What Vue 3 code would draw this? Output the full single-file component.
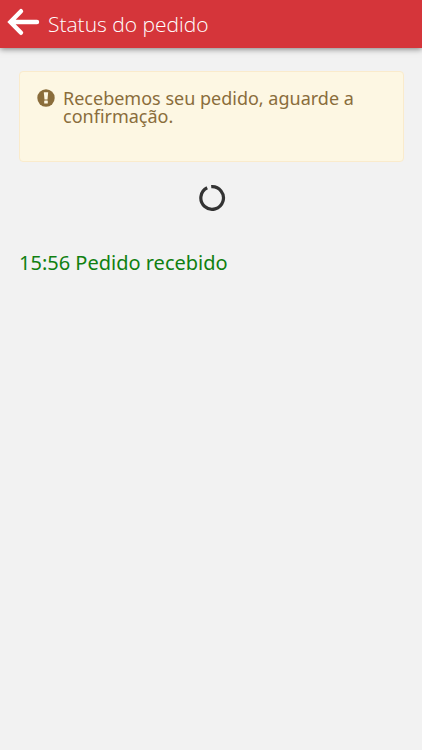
<template>
  <div class="status-view">
    <header class="topbar">
      <button type="button" class="back" aria-label="Voltar">
        <svg viewBox="0 0 34 28" width="34" height="28" aria-hidden="true">
          <path d="M15 3.2 L4.4 14 L15 24.8 M5 14 H31" fill="none" stroke="#fff" stroke-width="4.4" stroke-linecap="round" stroke-linejoin="miter" />
        </svg>
      </button>
      <h1 class="title">Status do pedido</h1>
    </header>

    <main class="content">
      <div class="alert" role="alert">
        <svg class="alert-icon" viewBox="0 0 18 18" width="18" height="18" aria-hidden="true">
          <circle cx="9" cy="9" r="8.7" fill="#8a6d3b" />
          <path d="M6.8 3.2 H11.2 L10.5 10.4 H7.5 Z" fill="#fdf7e3" />
          <rect x="7.2" y="11.6" width="3.6" height="3" rx="0.4" fill="#fdf7e3" />
        </svg>
        <p class="alert-text">{{ message }}</p>
      </div>

      <div class="loading" role="status" aria-label="Carregando">
        <svg viewBox="0 0 28 28" width="28" height="28" aria-hidden="true">
          <path d="M13.2 2.7 A11.3 11.3 0 1 1 9.2 3.8" fill="none" stroke="#333" stroke-width="3.2" />
        </svg>
      </div>

      <ul class="events">
        <li v-for="event in events" :key="event.time">{{ event.time }} {{ event.label }}</li>
      </ul>
    </main>
  </div>
</template>

<script setup>
import { ref } from 'vue'

const message = ref('Recebemos seu pedido, aguarde a confirmação.')
const events = ref([
  { time: '15:56', label: 'Pedido recebido' }
])
</script>

<style>
body { margin: 0; background: #f2f2f2; }
</style>

<style scoped>
.status-view { font-family: "Noto Sans", "Open Sans", sans-serif; }
.topbar { display: flex; align-items: center; gap: 8px; height: 48px; padding: 0 6px; background: #d5353a; box-shadow: 0 1px 6px rgba(0, 0, 0, 0.5); }
.back { display: flex; padding: 0 0 4px; border: 0; background: none; cursor: pointer; }
.title { margin: 0; font-family: "Open Sans", "Noto Sans", sans-serif; font-size: 21px; line-height: 28px; font-weight: 300; color: #fff; }
.content { padding: 23px 18px 0 19px; }
.alert { display: flex; align-items: flex-start; gap: 8px; padding: 17px 16px 36px 17px; border: 1px solid #faebcc; border-radius: 4px; background: #fdf7e3; color: #8a6d3b; }
.alert-icon { flex: none; }
.alert-text { margin: 0; font-size: 18px; line-height: 18px; }
.loading { display: flex; justify-content: center; padding: 22px 0 0; }
.events { margin: 36px 0 0; padding: 0; list-style: none; font-size: 20px; line-height: 30px; color: #108010; }
</style>
